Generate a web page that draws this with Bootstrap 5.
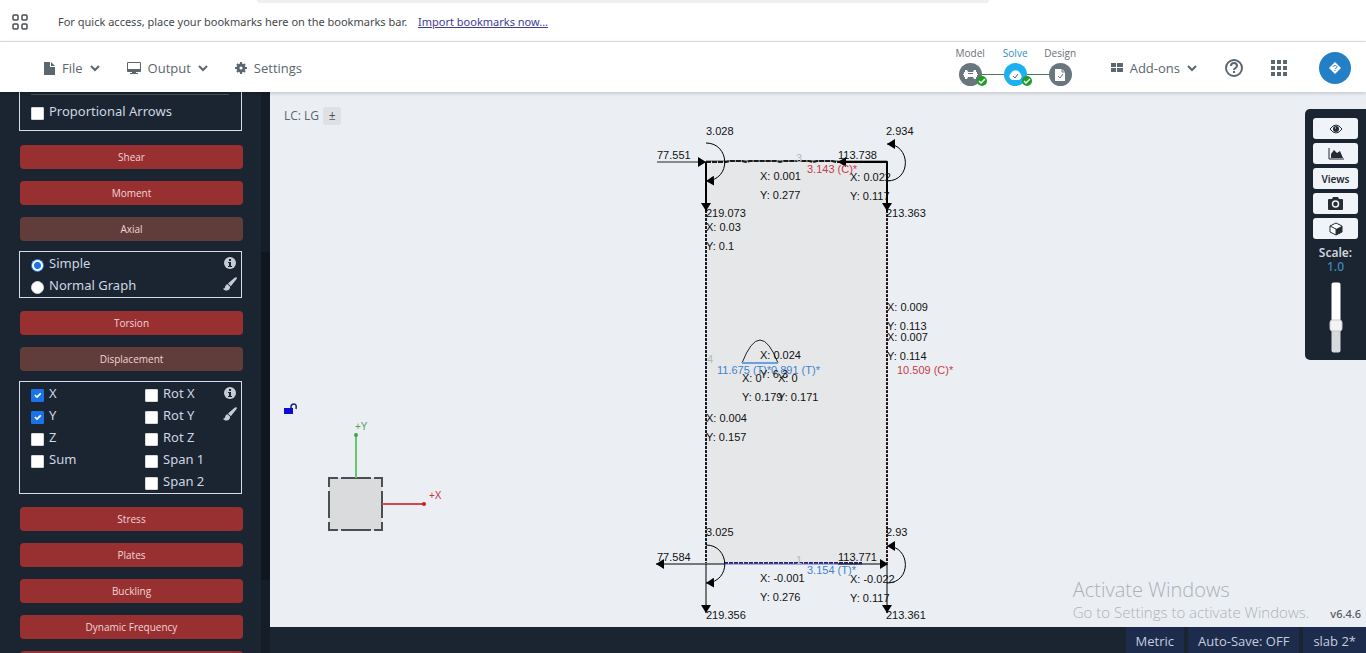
<!DOCTYPE html>
<html lang="en">
<head>
<meta charset="utf-8">
<meta name="viewport" content="width=device-width, initial-scale=1">
<title>Structural analysis</title>
<link href="https://cdn.jsdelivr.net/npm/bootstrap@5.3.0/dist/css/bootstrap.min.css" rel="stylesheet">
<style>
:root { --navy:#1b2431; --slate:#5c666e; --paper:#ebeff3; }
body { font-family:"Noto Sans","Open Sans",sans-serif; font-size:13px; line-height:20px; color:var(--slate); background:var(--navy); }
svg { display:block; flex:none; }
.tabstrip { height:3px; width:calc(54% - 5px); margin-left:calc(19% - 3px); background:#efefef; border-radius:0 0 6px 6px; }
.bookmarks { height:42px; background:#fff; border-bottom:1px solid #e1e2e4; font-size:11px; color:#44474c; }
.bookmarks a { color:#3f3a94; }
.bookmarks .hint { padding-left:6px; }
.topbar { height:50px; padding-top:2px; background:#fff; z-index:2; box-shadow:0 1px 4px #0003; font-family:"Open Sans",sans-serif; }
.topbar .btn { font-size:13px; line-height:20px; color:var(--slate); border:0; gap:7px; }
.menus { gap:27px; }
.steps { font-size:10px; line-height:14px; padding-bottom:4px; }
.steps a { width:45px; color:#6b7075; }
.steps a.active { color:#2b93b8; }
.ball { width:23px; height:23px; margin-top:3px; border-radius:50%; background:#69767e; color:#fff; }
.active .ball { background:#1cb0f1; }
.linked::before { content:""; position:absolute; left:-22px; top:11px; width:22px; height:1px; background:#4f7a57; }
.tick { position:absolute; left:28px; top:29px; }
.avatar { width:32px; height:32px; margin-right:15px; background:#2480c6; }
.panel { width:270px; flex:none; padding:0 28px 0 19px; color:#cdd6e4; }
.panel .btn { height:24px; margin:0 -1px 12px 1px; padding:0; width:100%; font-family:"Open Sans",sans-serif; font-size:10px; line-height:22px; border:0; border-radius:4px; color:#f2d5d5; background:#983032; flex:none; }
.panel .btn.open { background:#603c3a; margin-bottom:10px; }
.optbox { border:1px solid #d5dce8; padding:1px 4px 0 11px; margin-bottom:13px; flex:none; }
.optbox .form-check { min-height:22px; height:22px; margin:0; padding:0; display:flex; align-items:center; gap:5px; line-height:20px; }
.optbox .form-check-label { padding-bottom:2px; }
.optbox .form-check-input { width:13px; height:13px; margin:3px 0 0; float:none; border:1px solid #d8d8d8; background-color:#fff; flex:none; }
.optbox .form-check-input[type=checkbox] { border-radius:1px; }
.optbox .form-check-input[type=checkbox]:checked { background-color:#1a73e8; border-color:#1a73e8; }
.optbox .form-check-input[type=radio]:checked { border-color:#1a73e8; background-image:radial-gradient(circle,#1a73e8 3px,#fff 4px); }
.optbox .colleft { width:114px; }
.first-box { height:39px; margin-bottom:14px; border-top:0; padding-top:2px; }
.first-box hr { margin:0 8px 6px 0; opacity:.25; }
.scroller { position:absolute; right:0; top:0; bottom:0; width:9px; background:#151d29; }
.scroller div { margin-top:160px; height:328px; background:#0f161f; }
.stage { background:var(--paper); }
.stage > svg { position:absolute; inset:0; width:100%; height:100%; }
.stage text { font-family:"Liberation Sans",sans-serif; font-size:11px; }
.lc { position:absolute; left:14px; top:15px; font-family:"Open Sans",sans-serif; font-size:12px; line-height:18px; }
.lc .btn { width:18px; height:18px; padding:0; line-height:16px; font-size:12px; background:#dfe2e5; color:#4c5258; border:0; border-radius:3px; }
.tools { position:absolute; right:0; top:17px; width:61px; height:251px; padding:9px 8px; background:var(--navy); border-radius:5px 0 0 5px; }
.tools .btn { width:45px; height:21px; padding:0; font-size:10px; line-height:20px; font-weight:600; background:#f0f3f7; color:#252c35; border:0; border-radius:3px; }
.tools label { color:#cfd5df; font-weight:600; font-size:12px; line-height:14px; margin-top:7px; }
.tools output { color:#3f87bd; font-weight:500; font-size:12px; line-height:14px; }
.slide { width:14px; height:70px; margin-top:10px; }
.slide input { -webkit-appearance:none; appearance:none; width:70px; height:9px; flex:none; margin:0; transform:rotate(-90deg); border-radius:2px; background:linear-gradient(90deg,#d7dadb 36%,#fff 36%); }
.slide input::-webkit-slider-thumb { -webkit-appearance:none; width:12px; height:13px; border-radius:3px; background:#f3f3f3; border:1px solid #c9c9c9; }
.notice { position:absolute; right:5px; bottom:5px; color:#adb1b5; font-family:"Open Sans",sans-serif; font-weight:300; }
.notice .big { font-size:20px; line-height:24px; }
.notice .sub { font-size:15px; line-height:20px; }
.notice .ver { font-family:"Noto Sans",sans-serif; font-size:11px; line-height:16px; font-weight:500; color:#555b62; margin-left:21px; }
.status { height:26px; font-family:"Open Sans",sans-serif; font-size:13px; font-weight:500; color:#c6cddd; }
.status span { background:#1d2c4c; padding:4px 10px 2px; }
</style>
</head>
<body class="vh-100 d-flex flex-column overflow-hidden">
<svg width="0" height="0" class="position-absolute" aria-hidden="true">
  <defs>
    <symbol id="chev" viewBox="0 0 10 10"><path d="M1 3l4 4 4-4" fill="none" stroke="currentColor" stroke-width="2"/></symbol>
    <symbol id="info" viewBox="0 0 12 12"><circle cx="6" cy="6" r="6" fill="#c5ccd6"/><path d="M5 2h2v2H5zM4 5h3v4h1v1H4V9h1V6H4z" fill="#1b2431"/></symbol>
    <symbol id="brush" viewBox="0 0 14 14"><path d="M13.700.5C13 -.2 12 .4 11.300 1L5 6.500 7.800 9.300 13.200 2.500C13.800 1.800 14.200 1 13.700.5zM4.600 7.200C3 7.200 2.300 8.900 2 10.300 1.800 11.300 1 11.600 0 11.500 1 13.500 3 14 4.600 13.300 6.200 12.700 7.500 11.200 6.900 9.600z" fill="#c5ccd6"/></symbol>
    <symbol id="ok" viewBox="0 0 11 11"><circle cx="6" cy="6" r="5" fill="#1f9d26"/><path d="M3 6l2 2 4-4" fill="none" stroke="#fff" stroke-width="1.500"/></symbol>
    <marker id="tip" viewBox="0 0 8 10" refX="8" refY="5" markerWidth="8" markerHeight="10" markerUnits="userSpaceOnUse" orient="auto"><path d="M0 0L8 5 0 10z"/></marker>
  </defs>
</svg>

<div class="bookmarks flex-shrink-0">
  <div class="tabstrip"></div>
  <div class="d-flex align-items-center h-100 ps-2 pb-1">
    <svg class="ms-1 me-2" width="16" height="16" fill="none" stroke="#4a4d50"><rect x="1" y="1" width="5" height="5" rx="1" stroke-width="1.500"/><rect x="10" y="1" width="5" height="5" rx="1" stroke-width="1.500"/><rect x="1" y="10" width="5" height="5" rx="1" stroke-width="1.500"/><rect x="10" y="10" width="5" height="5" rx="1" stroke-width="1.500"/></svg>
    <span class="hint ms-3">For quick access, place your bookmarks here on the bookmarks bar. <a href="#" class="ms-2">Import bookmarks now...</a></span>
  </div>
</div>

<header class="topbar d-flex align-items-center flex-shrink-0 position-relative">
  <nav class="menus d-flex align-items-center ms-4 ps-3">
    <button class="btn p-0 d-flex align-items-center"><svg class="ms-1" width="11" height="13" fill="currentColor"><path d="M0 0h6v5h5v8H0zM7 0l4 4H7z"/></svg>File<svg width="10" height="10"><use href="#chev"/></svg></button>
    <button class="btn p-0 d-flex align-items-center"><svg width="14" height="13" fill="currentColor"><path fill-rule="evenodd" d="M1 0h12q1 0 1 1v8q0 1-1 1H9v1h2v1H3v-1h2v-1H1Q0 10 0 9V1Q0 0 1 0zM1 1v6h12V1z"/></svg>Output<svg width="10" height="10"><use href="#chev"/></svg></button>
    <button class="btn p-0 d-flex align-items-center"><svg width="12" height="12" viewBox="0 0 12 12"><circle cx="6" cy="6" r="3" fill="none" stroke="currentColor" stroke-width="3"/><path d="M6 0v3M6 9v3M0 6h3M9 6h3M2 2l2 2M8 8l2 2M10 2L8 4M4 8l-2 2" stroke="currentColor" stroke-width="2"/></svg>Settings</button>
  </nav>
  <nav class="steps d-flex ms-auto">
    <a href="#" class="position-relative text-decoration-none d-flex flex-column align-items-center">Model
      <span class="ball position-relative d-flex align-items-center justify-content-center"><svg width="15" height="9" viewBox="0 0 15 9" fill="#fff"><path d="M2 0h2l1 2h5l1-2h2v2h1v2h1v1h-1v2h-1v2h-2l-1-2H5L4 9H2V7H1V5H0V4h1V2h1z"/><path d="M5 4l1-1 1 1 1-1 1 1 1-1" fill="none" stroke="#69767e" stroke-width="1"/></svg></span>
      <svg class="tick" width="11" height="11"><use href="#ok"/></svg></a>
    <a href="#" class="active position-relative text-decoration-none d-flex flex-column align-items-center">Solve
      <span class="ball linked position-relative d-flex align-items-center justify-content-center"><svg width="15" height="12" viewBox="0 0 15 12"><path d="M4 11a4 4 0 0 1-1-7 5 5 0 0 1 9 0 4 4 0 0 1-1 7z" fill="#fff"/><path d="M5 7l2 2 3-4" fill="none" stroke="#4a6f80"/></svg></span>
      <svg class="tick" width="11" height="11"><use href="#ok"/></svg></a>
    <a href="#" class="position-relative text-decoration-none d-flex flex-column align-items-center">Design
      <span class="ball linked position-relative d-flex align-items-center justify-content-center"><svg width="12" height="14" viewBox="0 0 12 14"><path d="M1 1h7l3 3v9H1z" fill="#fff"/><path d="M8 1v3h3M4 8l2 2 3-4" fill="none" stroke="#69767e"/></svg></span></a>
  </nav>
  <button class="btn p-0 d-flex align-items-center ms-4 me-4"><svg class="ms-1" width="12" height="10" fill="currentColor"><path d="M0 0h5v4H0zM6 0h6v4H6zM0 5h5v4H0zM6 5h6v4H6z"/></svg>Add-ons<svg width="10" height="10"><use href="#chev"/></svg></button>
  <button class="btn p-0 ms-1" aria-label="Help"><svg width="18" height="18" fill="none" stroke="currentColor" stroke-width="2"><circle cx="9" cy="9" r="8"/><path d="M6 7c0-4 6-4 6 0 0 2-3 2-3 4M9 12v2"/></svg></button>
  <button class="btn p-0 ms-4 me-4" aria-label="Apps"><svg class="ms-1" width="16" height="16" fill="currentColor"><path d="M0 0h4v4H0zM6 0h4v4H6zM12 0h4v4h-4zM0 6h4v4H0zM6 6h4v4H6zM12 6h4v4h-4zM0 12h4v4H0zM6 12h4v4H6zM12 12h4v4h-4z"/></svg></button>
  <button class="avatar btn p-0 rounded-circle d-flex align-items-center justify-content-center ms-2" aria-label="Account"><svg width="12" height="12" viewBox="0 0 12 12"><path d="M6 0l6 6-6 6-6-6z" fill="#fff"/><path d="M4 5c0-2 4-2 4 0 0 1-2 1-2 2M6 8v1" fill="none" stroke="#2480c6"/></svg></button>
</header>

<div class="d-flex flex-fill overflow-hidden">
  <aside class="panel position-relative d-flex flex-column overflow-hidden">
    <div class="optbox first-box">
      <hr>
      <div class="form-check"><input class="form-check-input" type="checkbox" id="pa"><label class="form-check-label" for="pa">Proportional Arrows</label></div>
    </div>
    <button class="btn">Shear</button>
    <button class="btn">Moment</button>
    <button class="btn open">Axial</button>
    <div class="optbox d-flex justify-content-between">
      <div>
        <div class="form-check"><input class="form-check-input" type="radio" name="ax" id="a1" checked><label class="form-check-label" for="a1">Simple</label></div>
        <div class="form-check"><input class="form-check-input" type="radio" name="ax" id="a2"><label class="form-check-label" for="a2">Normal Graph</label></div>
      </div>
      <div class="d-flex flex-column align-items-center gap-2 pt-1"><svg width="12" height="12"><use href="#info"/></svg><svg width="14" height="14"><use href="#brush"/></svg></div>
    </div>
    <button class="btn">Torsion</button>
    <button class="btn open">Displacement</button>
    <div class="optbox d-flex">
      <div class="colleft">
        <div class="form-check"><input class="form-check-input" type="checkbox" id="d1" checked><label class="form-check-label" for="d1">X</label></div>
        <div class="form-check"><input class="form-check-input" type="checkbox" id="d2" checked><label class="form-check-label" for="d2">Y</label></div>
        <div class="form-check"><input class="form-check-input" type="checkbox" id="d3"><label class="form-check-label" for="d3">Z</label></div>
        <div class="form-check"><input class="form-check-input" type="checkbox" id="d4"><label class="form-check-label" for="d4">Sum</label></div>
      </div>
      <div class="flex-fill">
        <div class="form-check"><input class="form-check-input" type="checkbox" id="r1"><label class="form-check-label" for="r1">Rot X</label></div>
        <div class="form-check"><input class="form-check-input" type="checkbox" id="r2"><label class="form-check-label" for="r2">Rot Y</label></div>
        <div class="form-check"><input class="form-check-input" type="checkbox" id="r3"><label class="form-check-label" for="r3">Rot Z</label></div>
        <div class="form-check"><input class="form-check-input" type="checkbox" id="r4"><label class="form-check-label" for="r4">Span 1</label></div>
        <div class="form-check"><input class="form-check-input" type="checkbox" id="r5"><label class="form-check-label" for="r5">Span 2</label></div>
      </div>
      <div class="d-flex flex-column align-items-center gap-2 pt-1"><svg width="12" height="12"><use href="#info"/></svg><svg width="14" height="14"><use href="#brush"/></svg></div>
    </div>
    <button class="btn">Stress</button>
    <button class="btn">Plates</button>
    <button class="btn">Buckling</button>
    <button class="btn">Dynamic Frequency</button>
    <button class="btn" aria-label="More results"></button>
    <div class="scroller"><div></div></div>
  </aside>

  <div class="d-flex flex-column flex-fill overflow-hidden">
    <main class="stage position-relative flex-fill">
      <svg viewBox="270 92 1096 535">
        <rect x="706" y="162" width="181" height="402" fill="#e6e7e9"/>
        <g fill="none" stroke="#1a1a1a" stroke-width="2">
          <path d="M706 162V563" stroke-dasharray="3 1"/><path d="M706 162V563" stroke="#1a2f60" stroke-width="1" stroke-dasharray="1 3" />
          <path d="M887 162V563" stroke-dasharray="3 1"/><path d="M887 162V563" stroke="#a03040" stroke-width="1" stroke-dasharray="1 3"/>
          <path d="M706 161h181" stroke-width="1" stroke="#555"/>
          <path d="M706 162h20l4-1h12l4 1 4-1h26l4 1 4-1h25l4 1 4-1h15l4 1h52" stroke-dasharray="5 1"/>
          <path d="M724 563H862" stroke="#26265a" stroke-dasharray="4 1"/><path d="M724 564H862" stroke="#5b62d8" stroke-width="1"/>
        </g>
        <g fill="none" stroke="#000">
          <path d="M657 162H706" marker-end="url(#tip)" stroke="#222"/>
          <path d="M887 162H838" marker-end="url(#tip)" stroke-width="2"/>
          <path d="M706 162V211" marker-end="url(#tip)" stroke-width="2"/>
          <path d="M887 162V211" marker-end="url(#tip)" stroke-width="2"/>
          <path d="M724 564H656" marker-end="url(#tip)"/>
          <path d="M838 564H888" marker-end="url(#tip)"/>
          <path d="M706 564V613" marker-end="url(#tip)"/>
          <path d="M887 564V613" marker-end="url(#tip)"/>
          <path d="M706 143C730 143 732 180 706 181" marker-end="url(#tip)"/>
          <path d="M887 181C912 181 911 144 887 144" marker-end="url(#tip)"/>
          <path d="M706 545C730 545 732 582 706 583" marker-end="url(#tip)"/>
          <path d="M887 583C912 583 911 546 887 546" marker-end="url(#tip)"/>
        </g>
        <path d="M742 363Q760 317 778 363" fill="none" stroke="#222"/><path d="M742 363H778" stroke="#69a0e0" stroke-width="2"/>
        <g fill="#b5b9bd"><text x="796" y="162">3</text><text x="796" y="564">1</text><text x="707" y="363">4</text></g>
        <g fill="#c93b4a"><text x="807" y="173">3.143 (C)*</text><text x="897" y="374">10.509 (C)*</text></g>
        <g fill="#3f83cf"><text x="717" y="374">11.675 (T)*</text><text x="771" y="374">0.891 (T)*</text><text x="807" y="574">3.154 (T)*</text></g>
        <g fill="#111">
          <text x="706" y="135">3.028</text><text x="886" y="135">2.934</text><text x="657" y="159">77.551</text><text x="838" y="159">113.738</text>
          <text x="760" y="180">X: 0.001</text><text x="760" y="199">Y: 0.277</text><text x="850" y="181">X: 0.022</text><text x="850" y="200">Y: 0.117</text>
          <text x="706" y="217">219.073</text><text x="706" y="231">X: 0.03</text><text x="706" y="250">Y: 0.1</text><text x="886" y="217">213.363</text>
          <text x="887" y="311">X: 0.009</text><text x="887" y="330">Y: 0.113</text><text x="887" y="341">X: 0.007</text><text x="887" y="360">Y: 0.114</text>
          <text x="760" y="359">X: 0.024</text><text x="760" y="378">Y: 6.3</text><text x="742" y="382">X: 0</text><text x="778" y="382">X: 0</text>
          <text x="742" y="401">Y: 0.179</text><text x="778" y="401">Y: 0.171</text><text x="706" y="422">X: 0.004</text><text x="706" y="441">Y: 0.157</text>
          <text x="706" y="536">3.025</text><text x="886" y="536">2.93</text><text x="657" y="561">77.584</text><text x="838" y="561">113.771</text>
          <text x="760" y="582">X: -0.001</text><text x="760" y="601">Y: 0.276</text><text x="850" y="583">X: -0.022</text><text x="850" y="602">Y: 0.117</text>
          <text x="706" y="619">219.356</text><text x="886" y="619">213.361</text>
        </g>
        <path d="M284 408h9v6h-9z" fill="#0d0bd0"/><path d="M291 408v-1q0-3 3-3t2 5" fill="none" stroke="#20207a" stroke-width="1.500"/>
        <rect x="329" y="478" width="53" height="52" fill="#dadbdc"/>
        <path d="M328 478h10m3 0h30m3 0h9M328 530h10m3 0h30m3 0h9M329 478v9m0 4v27m0 4v9M382 478v9m0 4v27m0 4v9" stroke="#4c4f52" stroke-width="2"/>
        <path d="M356 478V435" stroke="#6cc36e" stroke-width="2"/><circle cx="356" cy="435" r="2" fill="#48a04c"/>
        <path d="M382 504H424" stroke="#d44" stroke-width="2"/><circle cx="424" cy="504" r="2" fill="#c02028"/>
        <text x="355" y="430" fill="#5a9d5c" style="font-size:10px">+Y</text><text x="429" y="499" fill="#c8323a" style="font-size:10px">+X</text>
      </svg>
      <div class="lc d-flex align-items-center gap-1">LC: LG <button class="btn">±</button></div>
      <div class="tools d-flex flex-column align-items-center">
        <div class="d-flex flex-column gap-1">
          <button class="btn d-flex align-items-center justify-content-center" aria-label="Visibility"><svg width="14" height="10" viewBox="0 0 14 10"><path d="M1 5q6-8 12 0-6 8-12 0z" fill="none" stroke="currentColor"/><circle cx="7" cy="5" r="3" fill="currentColor"/><path d="M6 4h1" stroke="#fff"/></svg></button>
          <button class="btn d-flex align-items-center justify-content-center" aria-label="Graphs"><svg width="16" height="12" viewBox="0 0 16 12"><path d="M1 0v11h15" fill="none" stroke="currentColor"/><path d="M3 10V6l3-4 3 3 3-2 3 7z" fill="currentColor"/></svg></button>
          <button class="btn">Views</button>
          <button class="btn d-flex align-items-center justify-content-center" aria-label="Screenshot"><svg width="15" height="13" viewBox="0 0 15 13"><path d="M1 2h3l1-2h5l1 2h3q1 0 1 1v9q0 1-1 1H1q-1 0-1-1V3q0-1 1-1z" fill="currentColor"/><circle cx="7.500" cy="7" r="3" fill="currentColor" stroke="#f0f3f7" stroke-width="1.500"/></svg></button>
          <button class="btn d-flex align-items-center justify-content-center" aria-label="3D view"><svg width="14" height="14" viewBox="0 0 14 14"><path d="M1 4l6-3 6 3v6l-6 3-6-3z" fill="#fff" stroke="currentColor" stroke-linejoin="round"/><path d="M7 7l6-3v6l-6 3z" fill="currentColor"/><path d="M1 4l6 3v6" fill="none" stroke="currentColor"/></svg></button>
        </div>
        <label for="scale">Scale:</label><output for="scale">1.0</output>
        <div class="slide d-flex align-items-center justify-content-center"><input id="scale" type="range" min="0" max="100" value="37"></div>
      </div>
      <div class="notice d-flex align-items-end">
        <div><div class="big">Activate Windows</div><div class="sub">Go to Settings to activate Windows.</div></div><span class="ver">v6.4.6</span>
      </div>
    </main>
    <footer class="status d-flex justify-content-end flex-shrink-0 gap-1"><span>Metric</span><span>Auto-Save: OFF</span><span>slab 2*</span></footer>
  </div>
</div>
<script src="https://cdn.jsdelivr.net/npm/bootstrap@5.3.0/dist/js/bootstrap.bundle.min.js"></script>
</body>
</html>
